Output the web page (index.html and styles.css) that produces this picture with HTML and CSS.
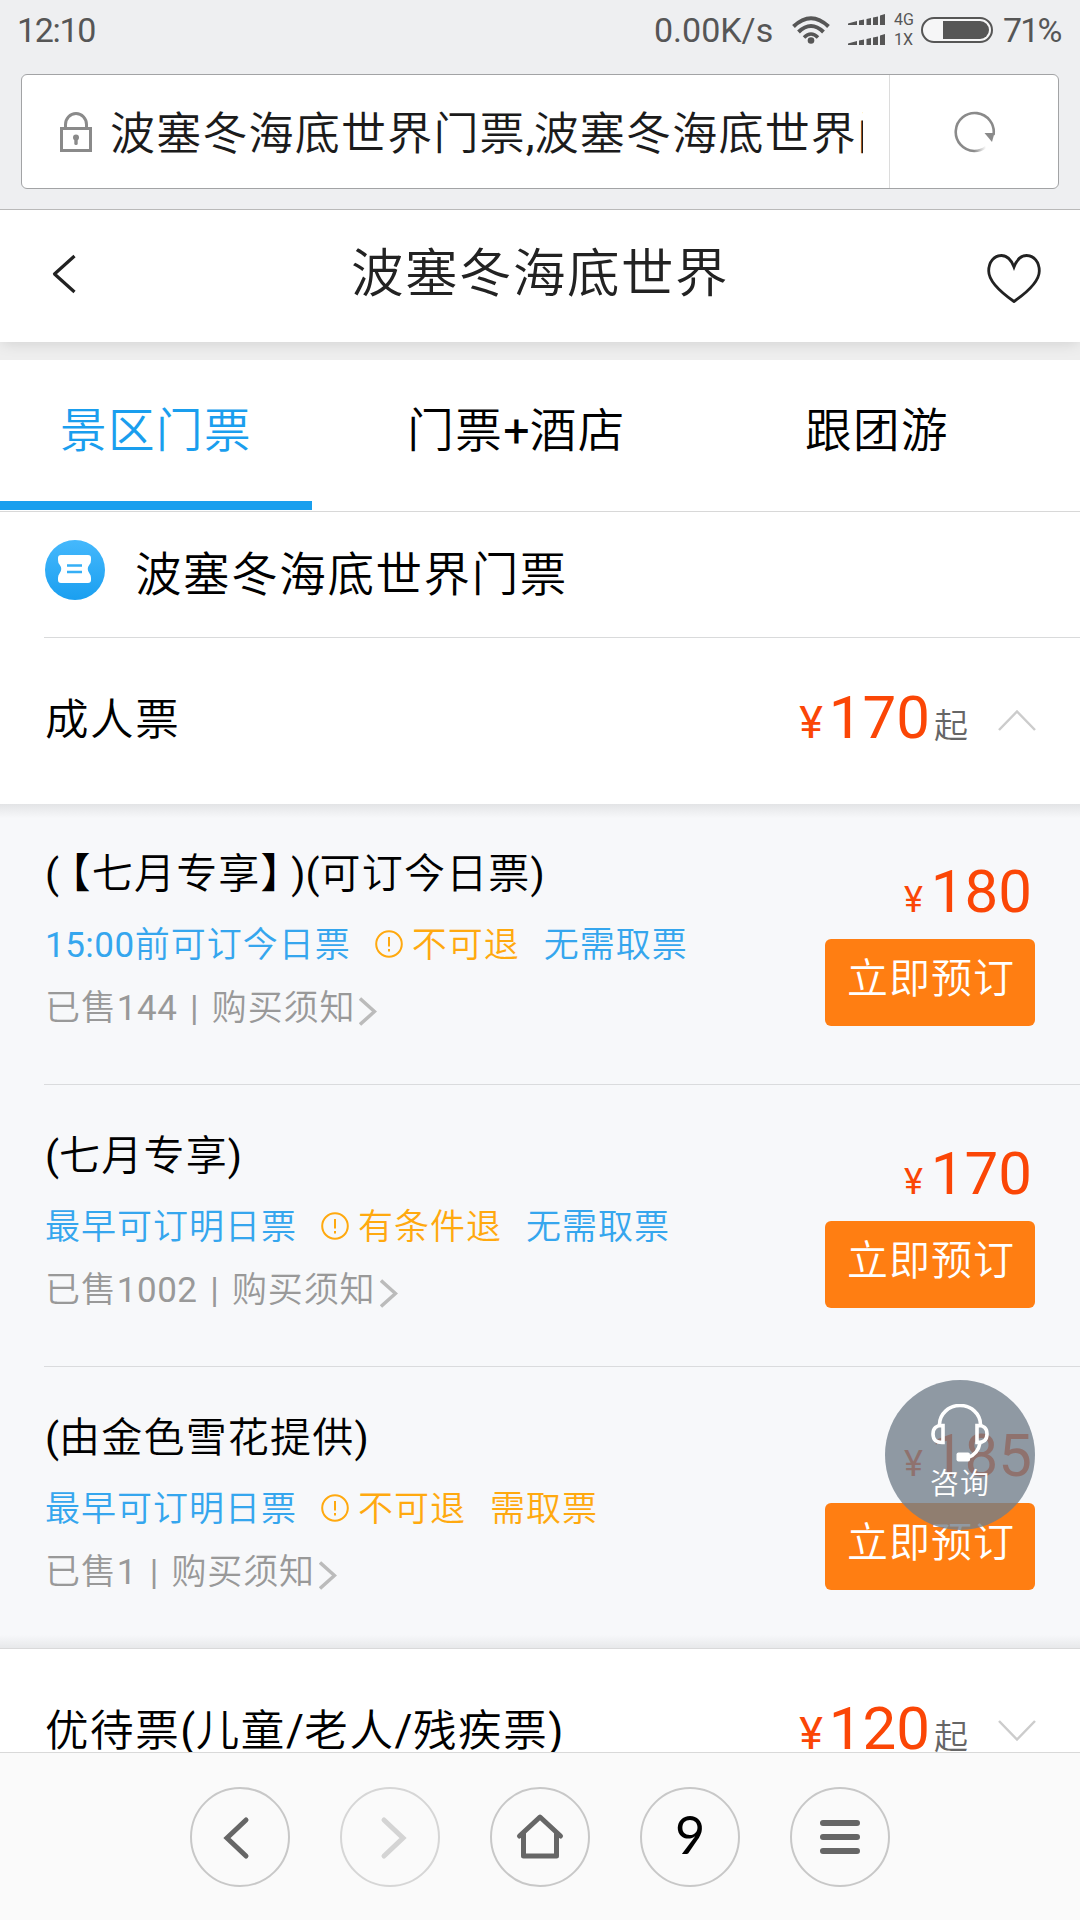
FILE: index.html
```html
<!DOCTYPE html>
<html lang="zh-CN">
<head>
<meta charset="utf-8">
<title>波塞冬海底世界</title>
<link rel="stylesheet" href="styles.css">
</head>
<body>
<div class="phone">
  <header class="chrome">
    <div class="status">
      <span class="clock">12:10</span>
      <span class="speed">0.00K/s</span>
      <svg class="wifi" viewBox="0 0 38 28" width="38" height="28">
        <g fill="none" stroke="#565656" stroke-width="4">
          <path d="M1.500 10.500Q19-6 36.500 10.500"/>
          <path d="M6.500 16Q19 4 31.500 16"/>
          <path d="M12 21.500Q19 14.500 26 21.500" stroke-width="3.500"/>
        </g>
        <circle cx="19" cy="24.500" r="3.300" fill="#565656"/>
      </svg>
      <svg class="signal" viewBox="0 0 38 32" width="38" height="32" fill="#565656">
        <path id="bars" d="M0 9.500L9 7V11H0ZM11 6.500L16 5.500V11H11ZM18.500 5L23 4V11H18.500ZM25 3.500L30 2.500V11H25ZM32 1.500L37 0V11H32Z"/>
        <use href="#bars" y="20"/>
      </svg>
      <span class="net"><span>4G</span><span>1X</span></span>
      <svg class="battery" viewBox="0 0 72 26" width="72" height="26">
        <rect x="1" y="1" width="70" height="24" rx="12" fill="#f6f6f7" stroke="#565656" stroke-width="2"/>
        <path d="M22 4H59A9 9 0 0 1 59 22H22Z" fill="#565656"/>
      </svg>
      <span class="percent">71%</span>
    </div>
    <div class="address">
      <svg class="lock" viewBox="0 0 32 40" width="32" height="40">
        <g fill="none" stroke="#8a8a8a" stroke-width="3"><rect x="1.500" y="16.500" width="29" height="22"/><path d="M5.500 16V12.500a10.500 11 0 0 1 21 0V16"/></g>
        <circle cx="16" cy="25.500" r="3" fill="#8a8a8a"/><rect x="14.300" y="26" width="3.400" height="7" rx="1.500" fill="#8a8a8a"/>
      </svg>
      <div class="url">波塞冬海底世界门票<span class="comma">,</span>波塞冬海底世界门票</div>
      <div class="reload">
        <svg viewBox="0 0 42 42" width="42" height="42">
          <defs><linearGradient id="fade" x1="0" y1="0" x2="1" y2="0"><stop offset="0" stop-color="#8a8a8a"/><stop offset="1" stop-color="#fff"/></linearGradient></defs>
          <path d="M39.500 24A19 19 0 1 0 20 40" fill="none" stroke="#8a8a8a" stroke-width="2.600"/>
          <path d="M20 40A19 19 0 0 0 32 36" fill="none" stroke="url(#fade)" stroke-width="2.600"/>
          <path d="M30.500 22H40.500L38 31Z" fill="#8a8a8a"/>
        </svg>
      </div>
    </div>
  </header>

  <main class="page">
    <div class="titlebar">
      <svg class="back" viewBox="0 0 24 40" width="24" height="40"><path d="M22.500 2L2.500 20L22.500 38" fill="none" stroke="#222" stroke-width="3.200" stroke-linejoin="round"/></svg>
      <h1>波塞冬海底世界</h1>
      <svg class="heart" viewBox="0 0 54 50" width="54" height="50"><path d="M27 14C24 6 20 2.500 14.500 2.500C7 2.500 1.700 9 1.700 18C1.700 28 12 38 27 48.500C42 38 52.300 28 52.300 18C52.300 9 47 2.500 39.500 2.500C34 2.500 30 6 27 14Z" fill="none" stroke="#222" stroke-width="2.800"/></svg>
    </div>
    <nav class="tabs">
      <a class="tab active">景区门票</a>
      <a class="tab wide">门票<span class="plus">+</span>酒店</a>
      <a class="tab">跟团游</a>
    </nav>
    <section class="tickets">
      <div class="section-title">
        <svg viewBox="0 0 60 60" width="60" height="60">
          <defs><linearGradient id="disc" x1="0" y1="0" x2="0" y2="1"><stop offset="0" stop-color="#45b8fc"/><stop offset="1" stop-color="#1a9ff0"/></linearGradient></defs>
          <circle cx="30" cy="30" r="30" fill="url(#disc)"/>
          <path d="M16 15H43Q46 15 46 18V20Q46 23 44.500 24.500Q41 29 44.500 33.500Q46 35 46 38V40Q46 43 43 43H16Q13 43 13 40V38Q13 35 14.500 33.500Q18 29 14.500 24.500Q13 23 13 20V18Q13 15 16 15Z" fill="#fff"/>
          <path d="M22 25.500H37M22 32H37" stroke="#35aff6" stroke-width="2.500"/>
        </svg>
        <h2>波塞冬海底世界门票</h2>
      </div>
      <div class="group">
        <span class="group-name">成人票</span>
        <span class="from"><i>¥</i>170<b>起</b></span>
        <svg class="caret" viewBox="0 0 38 22" width="38" height="22"><path d="M1 21L19 2.500L37 21" fill="none" stroke="#ccc" stroke-width="2.500"/></svg>
      </div>
      <ul class="offers">
        <li class="offer">
          <div class="info">
            <h3><span class="num before-bracket">(</span>【七月专享】<span class="num after-bracket">)(</span>可订今日票<span class="num">)</span></h3>
            <p class="tags"><span><span class="num">15:00</span>前可订今日票</span><span class="warn"><svg viewBox="0 0 28 28" width="28" height="28"><circle cx="14" cy="14" r="12.800"/><path d="M14 7V16.500M14 19V21.500"/></svg>不可退</span><span>无需取票</span></p>
            <p class="sold">已售<span class="num">144 | </span>购买须知<svg viewBox="0 0 18 29" width="18" height="29"><path d="M1 1.500L15.500 14.500L1 27.500"/></svg></p>
          </div>
          <div class="buy"><span class="price"><i>¥</i>180</span><a class="book">立即预订</a></div>
        </li>
        <li class="offer">
          <div class="info">
            <h3><span class="num">(</span>七月专享<span class="num">)</span></h3>
            <p class="tags"><span>最早可订明日票</span><span class="warn"><svg viewBox="0 0 28 28" width="28" height="28"><circle cx="14" cy="14" r="12.800"/><path d="M14 7V16.500M14 19V21.500"/></svg>有条件退</span><span>无需取票</span></p>
            <p class="sold">已售<span class="num">1002 | </span>购买须知<svg viewBox="0 0 18 29" width="18" height="29"><path d="M1 1.500L15.500 14.500L1 27.500"/></svg></p>
          </div>
          <div class="buy"><span class="price"><i>¥</i>170</span><a class="book">立即预订</a></div>
        </li>
        <li class="offer">
          <div class="info">
            <h3><span class="num">(</span>由金色雪花提供<span class="num">)</span></h3>
            <p class="tags"><span>最早可订明日票</span><span class="warn"><svg viewBox="0 0 28 28" width="28" height="28"><circle cx="14" cy="14" r="12.800"/><path d="M14 7V16.500M14 19V21.500"/></svg>不可退</span><span class="warn">需取票</span></p>
            <p class="sold">已售<span class="num">1 | </span>购买须知<svg viewBox="0 0 18 29" width="18" height="29"><path d="M1 1.500L15.500 14.500L1 27.500"/></svg></p>
          </div>
          <div class="buy"><span class="price"><i>¥</i>185</span><a class="book">立即预订</a></div>
        </li>
      </ul>
      <div class="group">
        <span class="group-name">优待票<span class="num">(</span>儿童<span class="num">/</span>老人<span class="num">/</span>残疾票<span class="num">)</span></span>
        <span class="from"><i>¥</i>120<b>起</b></span>
        <svg class="caret" viewBox="0 0 38 22" width="38" height="22"><path d="M1 1L19 19.500L37 1" fill="none" stroke="#ccc" stroke-width="2.500"/></svg>
      </div>
    </section>
    <a class="consult">
      <svg viewBox="0 0 58 58" width="58" height="58">
        <g fill="none" stroke="#fff" stroke-width="3.600">
          <path d="M8.500 21V20.500A20.500 19 0 0 1 49.500 20.500V21"/>
          <path d="M12 21.500V38.500Q2 39 2 30Q2 21 12 21.500ZM46 21.500V38.500Q56 39 56 30Q56 21 46 21.500Z"/>
          <path d="M49 39Q47 50 37 53.500"/>
        </g>
        <rect x="25.500" y="48.500" width="13.500" height="9" rx="2" fill="#fff"/>
      </svg>
      <span>咨询</span>
    </a>
  </main>

  <footer class="toolbar">
    <a class="key"><svg viewBox="0 0 100 100"><path d="M56 32L37 50L56 68" transform="translate(0 1)"/></svg></a>
    <a class="key off"><svg viewBox="0 0 100 100"><path d="M44 32L63 50L44 68" transform="translate(0 1)"/></svg></a>
    <a class="key"><svg viewBox="0 0 100 100"><path d="M29.500 49L50 30L70.500 49M33.500 46V69H66.500V46" stroke-linejoin="round"/></svg></a>
    <a class="key count">9</a>
    <a class="key"><svg viewBox="0 0 100 100"><path d="M33 36H67M33 50H67M33 64H67" stroke-width="6"/></svg></a>
  </footer>
</div>
</body>
</html>
```

FILE: styles.css
```css
* { box-sizing: border-box; margin: 0; padding: 0; }
body {
  width: 1080px;
  height: 1920px;
  overflow: hidden;
  background: #fff;
  color: #000;
  font-family: Roboto, "Noto Sans CJK SC", sans-serif;
}
h1, h2, h3, b, i { font-weight: 350; font-style: normal; }
ul { list-style: none; }
svg { display: block; flex: none; }
.num { letter-spacing: 0; font-weight: 400; }

.phone { display: flex; flex-direction: column; width: 1080px; height: 1920px; overflow: hidden; }

.chrome { flex: none; height: 210px; background: #eeeff1; border-bottom: 1px solid #b9b9b9; }
.status { display: flex; align-items: flex-start; height: 74px; padding: 10px 17px 0 17px; color: #565656; font-size: 34px; line-height: 40px; white-space: nowrap; }
.clock { width: 637px; letter-spacing: -1.300px; }
.speed { width: 138px; }
.wifi { margin-top: 6px; }
.signal { margin: 4px 8px 0 18px; }
.net { display: flex; flex-direction: column; width: 27px; font-size: 16px; line-height: 20px; }
.battery { margin: 7px 10px 0 0; }
.percent { letter-spacing: -1.800px; }

.address { display: flex; align-items: center; width: 1038px; height: 115px; margin-left: 21px; padding-left: 38px; background: #fff; border: 1px solid #a2a3a5; border-radius: 6px; }
.url { width: 753px; margin-left: 18px; padding-top: 6px; overflow: hidden; white-space: nowrap; color: #1b1b1b; font-size: 45px; font-weight: 350; letter-spacing: 1.200px; line-height: 60px; }
.comma { letter-spacing: -1px; font-weight: 400; }
.reload { display: flex; align-items: center; flex: 1; height: 113px; margin-left: 26px; padding-left: 64px; border-left: 1px solid #dcdcdc; }

.page { position: relative; flex: none; height: 1542px; overflow: hidden; background: #eee; }
.titlebar { display: flex; align-items: center; justify-content: space-between; height: 132px; padding: 0 39px 0 52px; background: #fff; box-shadow: 0 3px 14px -2px rgba(0,0,0,.13); }
.back { margin-top: -5px; }
.titlebar h1 { padding: 0 0 5px 17px; color: #222; font-size: 52.500px; line-height: 70px; letter-spacing: 1.500px; }
.heart { margin-top: 3px; }

.tabs { position: relative; display: flex; height: 152px; margin-top: 18px; background: #fff; border-bottom: 1px solid #d8d8d8; }
.tab { width: 312px; height: 150px; padding-top: 41px; text-align: center; font-size: 46.500px; line-height: 60px; letter-spacing: 1.500px; font-weight: 350; }
.tab.wide { width: 409px; }
.tab.active { color: #1a9eee; border-bottom: 9px solid #199fee; }
.plus { letter-spacing: 0; font-weight: 400; }

.tickets { background: #fff; font-weight: 350; }
.section-title { display: flex; height: 126px; margin-left: 44px; padding: 28px 0 0 1px; border-bottom: 1px solid #d9dadb; }
.section-title h2 { margin: 5px 0 0 30px; font-size: 46.500px; letter-spacing: 1.600px; line-height: 60px; }
.group { display: flex; align-items: flex-start; height: 166px; padding: 50px 44px 0 45px; }
.group-name { flex: 1; padding-top: 3px; font-size: 43.500px; letter-spacing: 1.600px; line-height: 60px; }
.group-name .num { letter-spacing: .500px; }
.from { height: 60px; color: #fb4606; font-size: 60px; line-height: 60px; font-weight: 400; white-space: nowrap; }
.from i { margin-right: 6px; font-size: 45px; font-weight: 400; line-height: 1; }
.from b { margin-left: 4px; color: #666; font-size: 34px; line-height: 1; }
.caret { margin: 21px 0 0 30px; }

.offers { background: #f7f8fa; background-image: linear-gradient(#e3e4e6, #f7f8fa 14px, #f7f8fa calc(100% - 14px), #e6e7e9); }
.offer { display: flex; justify-content: space-between; height: 282px; margin-left: 44px; padding: 46px 45px 0 1px; border-bottom: 1px solid #dadbdd; }
.offer:first-child { height: 281px; padding-top: 45px; }
.offer:last-child { margin-left: 0; padding-left: 45px; border-color: #d9d9da; }
.offer h3 { font-size: 41px; line-height: 50px; letter-spacing: 1.200px; white-space: nowrap; }
.before-bracket { margin-right: 11px; }
.after-bracket { margin-left: 9px; }
.tags { display: flex; gap: 24px; margin-top: 27px; color: #35a6ee; font-size: 35px; line-height: 40px; letter-spacing: 1px; white-space: nowrap; }
.tags .num, .sold .num { letter-spacing: .500px; }
.warn { display: flex; align-items: center; color: #ffa90f; }
.warn svg { margin: -4px 9px 0 0; fill: none; stroke: #ffa90f; stroke-width: 2; }
.sold { display: flex; align-items: center; margin-top: 23px; color: #999; font-size: 35px; line-height: 40px; letter-spacing: .900px; white-space: pre; }
.sold .num { word-spacing: 3.500px; }
.sold svg { margin: 4px 0 0 4px; fill: none; stroke: #bbb; stroke-width: 3.500; }
.buy { display: flex; flex-direction: column; align-items: flex-end; padding-top: 13px; }
.price { height: 60px; padding-right: 3px; color: #fb4606; font-size: 60px; font-weight: 400; line-height: 60px; white-space: nowrap; }
.price i { margin-right: 8px; font-size: 36px; font-weight: 400; line-height: 1; }
.book { width: 210px; height: 87px; margin-top: 17px; padding: 16px 0 0 22px; border-radius: 6px; background: #ff7e12; color: #fff; font-size: 41px; line-height: 48px; letter-spacing: 1px; }

.consult { position: absolute; left: 885px; top: 1170px; display: flex; flex-direction: column; align-items: center; width: 150px; height: 150px; padding-top: 24px; border-radius: 50%; background: rgba(113,126,139,.785); color: #fff; font-size: 29px; line-height: 36px; letter-spacing: 1px; font-weight: 350; }
.consult span { margin-top: 4px; }

.toolbar { flex: 1; display: flex; justify-content: center; gap: 50px; padding-top: 34px; background: #fafafa; border-top: 1px solid #d9d9d9; }
.key { width: 100px; height: 100px; border: 2px solid #c8c8c8; border-radius: 50%; }
.key svg { width: 100px; height: 100px; margin: -2px; fill: none; stroke: #666; stroke-width: 5; stroke-linecap: round; }
.key.off { border-color: #d6d6d6; }
.key.off svg { stroke: #d4d4d4; }
.count { font-family: Lato, sans-serif; font-size: 52px; line-height: 90px; text-align: center; }
```
